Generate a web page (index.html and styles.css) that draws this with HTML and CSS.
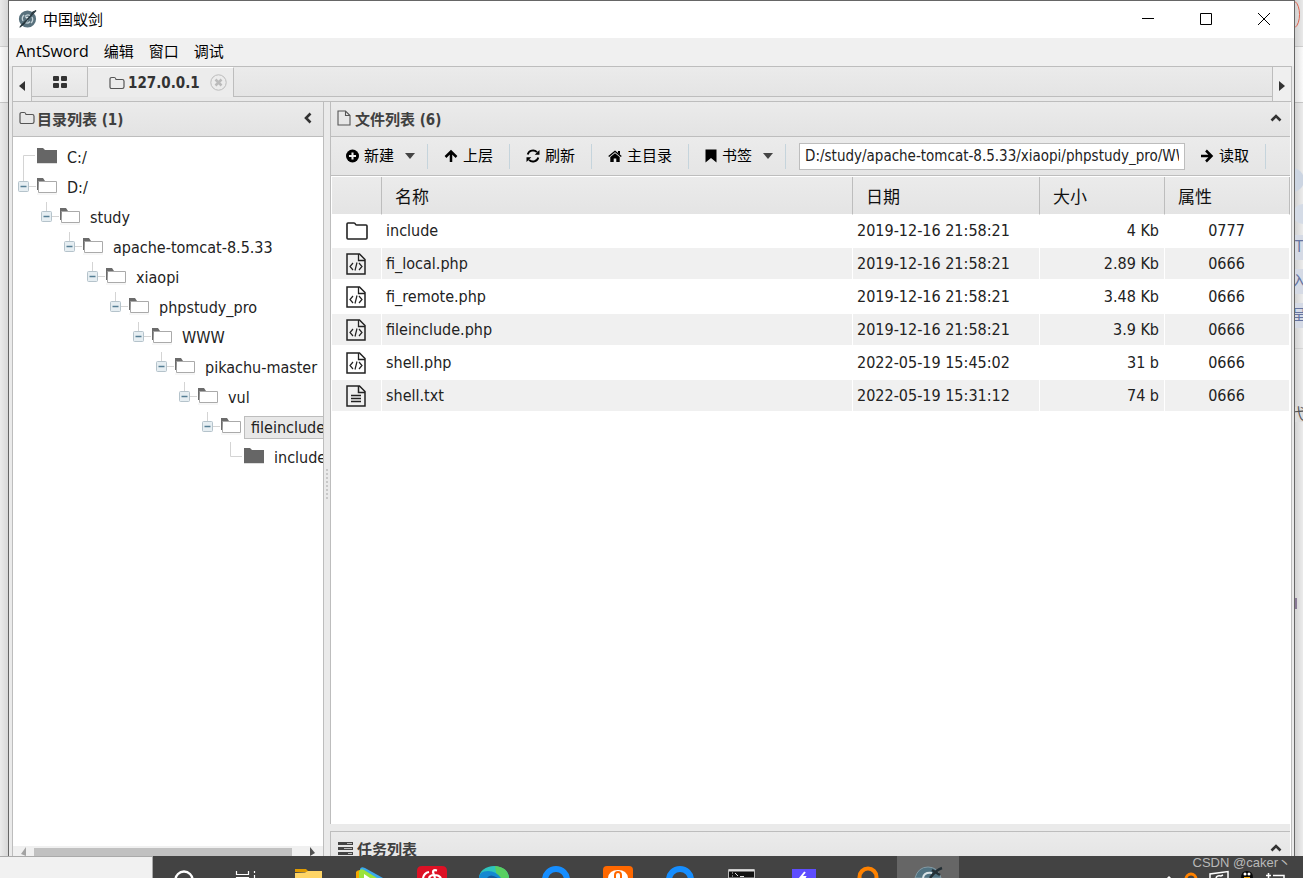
FILE: index.html
```html
<!DOCTYPE html>
<html lang="zh-CN">
<head>
<meta charset="utf-8">
<title>中国蚁剑</title>
<link rel="stylesheet" href="styles.css">
</head>
<body>
<svg class="defs" aria-hidden="true">
  <symbol id="folder-open" viewBox="0 0 20 17">
    <path d="M1.500 3.500h18v11h-18z" fill="#fff" stroke="#aaa"/><path d="M0 0h6l2 3H1.500L1 12H0z" fill="#6b6b6b"/><path d="M0 16h20" stroke="#eee"/>
  </symbol>
  <symbol id="folder-full" viewBox="0 0 20 17">
    <path d="M0 0h6l2 2h12v13H0z" fill="#666"/><path d="M0 15.500h20" stroke="#ddd"/>
  </symbol>
  <symbol id="join" viewBox="0 0 24 30">
    <path d="M10.500 0v14M10 14.500h13" stroke="#d4d4d4" fill="none"/>
    <rect x="5.500" y="9.500" width="10" height="10" rx="1" fill="#e6eef2" stroke="#b5c3cb"/><path d="M7.500 14.500h6" stroke="#557e94" stroke-width="1.500"/>
  </symbol>
  <symbol id="folder-o" viewBox="0 0 16 14">
    <path d="M1 3.200Q1 1.500 2.700 1.500h2.600Q6.700 1.500 7 3.500h6.300Q15 3.500 15 5.200v5.600q0 1.700-1.700 1.700H2.700Q1 12.500 1 10.800z" fill="none" stroke="#555" stroke-width="1.200"/>
  </symbol>
  <symbol id="file-code" viewBox="0 0 20 22">
    <path d="M1 1h12.500L19 6.500V21H1z" fill="none" stroke="#222" stroke-width="1.500"/><path d="M12.500 1v6.500H19" fill="none" stroke="#222" stroke-width="1.300"/>
    <path d="M7 10l-3 3.500 3 3.500M13 10l3 3.500-3 3.500M11 9.500l-2 8" fill="none" stroke="#222" stroke-width="1.200"/>
  </symbol>
  <symbol id="chev" viewBox="0 0 12 8"><path d="M1.500 6.500L6 2l4.500 4.500" fill="none" stroke="#333" stroke-width="2.600"/></symbol>
</svg>

<div class="desktop">
  <div class="stage">
    <div class="behind behind-left"></div>

    <main class="window">
      <header class="titlebar">
        <svg width="20" height="20" viewBox="0 0 20 20"><circle cx="9.500" cy="10" r="8.600" fill="#58717d"/><path d="M6 6a5 5 0 0 0-1 6M13 14a5 5 0 0 0 1-6M12 6.500a4 4 0 0 0-5 1M7 13.500a4 4 0 0 0 5-1" fill="none" stroke="#c6d3d8" stroke-width="1.300"/><path d="M9 7.500v5M7.500 8.500h3" stroke="#dce6ea"/><path d="M18.500 1L14 5l-2 1.500 2.500-4zM1 19l5-3.500 2.500-3-4 2z" fill="#27363d"/><path d="M18 1.500L2 18" stroke="#27363d" stroke-width="1.200"/></svg>
        <h1>中国蚁剑</h1>
        <div class="controls">
          <button aria-label="最小化"><svg width="14" height="14"><path d="M1 6.500h12" stroke="#000"/></svg></button>
          <button aria-label="最大化"><svg width="14" height="14"><path d="M1.500 1.500h11v11h-11z" fill="none" stroke="#000"/></svg></button>
          <button aria-label="关闭"><svg width="14" height="14"><path d="M1 1l12 12M13 1L1 13" stroke="#000"/></svg></button>
        </div>
      </header>

      <nav class="menubar">
        <button class="brand">AntSword</button><button>编辑</button><button>窗口</button><button>调试</button>
      </nav>

      <div class="workspace">
        <div class="tabbar">
          <button class="scroll scroll-left" aria-label="向左"><svg width="6" height="10"><path d="M6 0v10L0 5z" fill="#333"/></svg></button>
          <div class="tabs">
            <button class="tab home-tab" aria-label="主页"><svg width="14" height="12" fill="#333"><rect width="6" height="5" rx="1"/><rect x="8" width="6" height="5" rx="1"/><rect y="7" width="6" height="5" rx="1"/><rect x="8" y="7" width="6" height="5" rx="1"/></svg></button>
            <div class="tab active"><svg width="16" height="14"><use href="#folder-o"/></svg><span>127.0.0.1</span>
              <button class="close" aria-label="关闭标签"><svg width="17" height="17" viewBox="0 0 17 17"><circle cx="8.500" cy="8.500" r="7.700" fill="none" stroke="#bbb"/><path d="M5.500 5.500l6 6M11.500 5.500l-6 6" stroke="#bbb" stroke-width="2.500"/></svg></button>
            </div>
          </div>
          <button class="scroll scroll-right" aria-label="向右"><svg width="6" height="10"><path d="M0 0v10l6-5z" fill="#333"/></svg></button>
        </div>

        <div class="panes">
          <section class="side">
            <header class="pane-head side-head"><svg width="16" height="14"><use href="#folder-o"/></svg><h2>目录列表 (1)</h2>
              <button class="collapse" aria-label="折叠"><svg width="8" height="12"><path d="M6.500 1.500L2 6l4.500 4.500" fill="none" stroke="#333" stroke-width="2.600"/></svg></button></header>
            <div class="tree">
              <ul>
                <li><div class="node"><svg width="24" height="30"><path d="M22 13.500H10.500V30" fill="none" stroke="#d4d4d4"/></svg><svg width="20" height="17"><use href="#folder-full"/></svg><span>C:/</span></div></li>
                <li><div class="node"><svg width="24" height="30"><use href="#join"/></svg><svg width="20" height="17"><use href="#folder-open"/></svg><span>D:/</span></div>
                <ul><li><div class="node"><svg width="24" height="30"><use href="#join"/></svg><svg width="20" height="17"><use href="#folder-open"/></svg><span>study</span></div>
                <ul><li><div class="node"><svg width="24" height="30"><use href="#join"/></svg><svg width="20" height="17"><use href="#folder-open"/></svg><span>apache-tomcat-8.5.33</span></div>
                <ul><li><div class="node"><svg width="24" height="30"><use href="#join"/></svg><svg width="20" height="17"><use href="#folder-open"/></svg><span>xiaopi</span></div>
                <ul><li><div class="node"><svg width="24" height="30"><use href="#join"/></svg><svg width="20" height="17"><use href="#folder-open"/></svg><span>phpstudy_pro</span></div>
                <ul><li><div class="node"><svg width="24" height="30"><use href="#join"/></svg><svg width="20" height="17"><use href="#folder-open"/></svg><span>WWW</span></div>
                <ul><li><div class="node"><svg width="24" height="30"><use href="#join"/></svg><svg width="20" height="17"><use href="#folder-open"/></svg><span>pikachu-master</span></div>
                <ul><li><div class="node"><svg width="24" height="30"><use href="#join"/></svg><svg width="20" height="17"><use href="#folder-open"/></svg><span>vul</span></div>
                <ul><li><div class="node"><svg width="24" height="30"><use href="#join"/></svg><svg width="20" height="17"><use href="#folder-open"/></svg><span class="selected">fileinclude</span></div>
                <ul><li><div class="node"><svg width="24" height="30"><path d="M10.500 0v14.500H22" fill="none" stroke="#d4d4d4"/></svg><svg width="20" height="17"><use href="#folder-full"/></svg><span>include</span></div></li></ul>
                </li></ul></li></ul></li></ul></li></ul></li></ul></li></ul></li></ul></li></ul></li>
              </ul>
            </div>
            <div class="hscroll"><svg width="5" height="10"><path d="M5 1v9L0 8z" fill="#a3a3a3"/></svg><div class="thumb"></div><svg width="5" height="10"><path d="M0 1v9l5-3z" fill="#505050"/></svg></div>
          </section>

          <div class="splitter"><i></i></div>

          <div class="content">
            <section class="files">
              <header class="pane-head"><svg width="14" height="16" viewBox="0 0 14 16"><path d="M1 1h7.500L13 5.500V15H1zM8.500 1v4.500H13" fill="none" stroke="#555" stroke-width="1.100"/></svg><h2>文件列表 (6)</h2>
                <button class="collapse" aria-label="折叠"><svg width="12" height="8"><use href="#chev"/></svg></button></header>
              <div class="toolbar">
                <button class="tool first"><svg width="13" height="14" viewBox="0 0 14 14"><circle cx="7" cy="7" r="7"/><path d="M7 3.200v7.600M3.200 7h7.600" stroke="#eee" stroke-width="2.200"/></svg><span>新建</span><svg class="caret" width="10" height="6"><path d="M0 0h10L5 6z" fill="#444"/></svg></button>
                <button class="tool"><svg width="14" height="14" viewBox="0 0 14 14"><path d="M7 13V2.500M1.500 8L7 2.500 12.500 8" fill="none" stroke="#000" stroke-width="2.500"/></svg><span>上层</span></button>
                <button class="tool"><svg width="14" height="14" viewBox="0 0 14 14"><path d="M1.700 5.500A5.500 5.500 0 0 1 11 3.200M12.300 8.500A5.500 5.500 0 0 1 3 10.800" fill="none" stroke="#000" stroke-width="1.900"/><path d="M13.500 1v4.800H8.700zM.5 13V8.200h4.800z"/></svg><span>刷新</span></button>
                <button class="tool"><svg width="14" height="14" viewBox="0 0 14 14"><path d="M.7 7.500L7 2.300l6.300 5.200" fill="none" stroke="#000" stroke-width="1.400"/><path d="M10 2h2v4l-2-2zM2.300 8L7 4.200 11.700 8v5H8.300V9.500H5.700V13H2.300z"/></svg><span>主目录</span></button>
                <button class="tool marks"><svg width="12" height="14" viewBox="0 0 12 14"><path d="M.5.500h11v13L6 9 .5 13.500z"/></svg><span>书签</span><svg class="caret" width="10" height="6"><path d="M0 0h10L5 6z" fill="#444"/></svg></button>
                <input class="path" type="text" aria-label="路径" value="D:/study/apache-tomcat-8.5.33/xiaopi/phpstudy_pro/WWW/pikachu-master/vul/fileinclude/">
                <button class="tool read"><svg width="14" height="14" viewBox="0 0 14 14"><path d="M1 7h10.500M6 1.500L11.500 7 6 12.500" fill="none" stroke="#000" stroke-width="2.500"/></svg><span>读取</span></button>
              </div>
              <table>
                <colgroup><col class="c-icon"><col><col class="c-date"><col class="c-small"><col class="c-small"></colgroup>
                <thead><tr><th></th><th>名称</th><th>日期</th><th>大小</th><th>属性</th></tr></thead>
                <tbody>
                  <tr><td><svg width="22" height="18" viewBox="0 0 22 18"><path d="M1 2q0-1 1-1h6q1 0 1.500 1.200.3.800 1.500.8h9q1 0 1 1v12q0 1-1 1H2q-1 0-1-1z" fill="none" stroke="#222" stroke-width="1.600"/></svg></td><td>include</td><td>2019-12-16 21:58:21</td><td>4 Kb</td><td>0777</td></tr>
                  <tr><td><svg width="20" height="22"><use href="#file-code"/></svg></td><td>fi_local.php</td><td>2019-12-16 21:58:21</td><td>2.89 Kb</td><td>0666</td></tr>
                  <tr><td><svg width="20" height="22"><use href="#file-code"/></svg></td><td>fi_remote.php</td><td>2019-12-16 21:58:21</td><td>3.48 Kb</td><td>0666</td></tr>
                  <tr><td><svg width="20" height="22"><use href="#file-code"/></svg></td><td>fileinclude.php</td><td>2019-12-16 21:58:21</td><td>3.9 Kb</td><td>0666</td></tr>
                  <tr><td><svg width="20" height="22"><use href="#file-code"/></svg></td><td>shell.php</td><td>2022-05-19 15:45:02</td><td>31 b</td><td>0666</td></tr>
                  <tr><td><svg width="20" height="22" viewBox="0 0 20 22"><path d="M1 1h12.500L19 6.500V21H1zM12.500 1v6.500H19" fill="none" stroke="#222" stroke-width="1.500"/><path d="M5 10.500h10M5 13.500h10M5 16.500h10" stroke="#222" stroke-width="1.400"/></svg></td><td>shell.txt</td><td>2022-05-19 15:31:12</td><td>74 b</td><td>0666</td></tr>
                </tbody>
              </table>
            </section>
            <section class="tasks">
              <header class="pane-head"><svg width="16" height="13" viewBox="0 0 16 13"><path d="M1 0h15v3H1zM1 5h15v3H1zM1 10h15v3H1z" fill="#444"/><path d="M10 1.500h5M7 6.500h8M11 11.500h4" stroke="#bbb"/></svg><h2>任务列表</h2>
                <button class="collapse" aria-label="展开"><svg width="12" height="8"><use href="#chev"/></svg></button></header>
            </section>
          </div>
        </div>
      </div>
    </main>

    <div class="behind behind-right">
      <svg width="8" height="228" viewBox="0 0 8 228"><path d="M0 1.500c6 4 6 22 0 26" fill="none" stroke="#e0624d"/><circle cx="-3" cy="180" r="12" fill="#ccd5e2"/><circle cx="8" cy="214" r="10" fill="#d4dbe6"/></svg>
      <span>T</span><span>入</span><span>呈</span><span class="plain">弋</span><i></i>
    </div>
  </div>

  <footer class="taskbar">
    <div class="status"></div>
    <div class="apps">
      <button aria-label="搜索"><svg width="32" height="22"><circle cx="16" cy="24" r="8.500" fill="none" stroke="#fff" stroke-width="2.400"/></svg></button>
      <button aria-label="任务视图"><svg width="32" height="22"><path d="M6.500 15v3.500h12V15M6.500 22v-.5h12v.5M24.500 15v2M24.500 19v3" fill="none" stroke="#fff" stroke-width="1.200"/></svg></button>
      <button aria-label="文件"><svg width="32" height="22"><path d="M3 13h11l3 3H3z" fill="#e09b00"/><path d="M3 17l10-.5 3-1.500h14v7H3z" fill="#ffd566"/></svg></button>
      <button aria-label="视频"><svg width="32" height="22"><path d="M2 22v-6q1-2 5-2v8z" fill="#f5a800"/><path d="M6 22v-9q1-3 5-1l18 10z" fill="#39a9ee"/><path d="M5 22v-7q2-3 5-1l13 8z" fill="#9be33b"/><path d="M10 22v-4l6 4z" fill="#fff"/></svg></button>
      <button aria-label="音乐"><svg width="32" height="22"><path d="M1 22v-7q0-5 5-5h20q5 0 5 5v7z" fill="#dd1125"/><path d="M13 16q-5 1-6 6M21 14.500q-4-1-4 1.500l2 6M13 22q1-3 5-3 5 0 7 3" fill="none" stroke="#fff" stroke-width="2.200"/></svg></button>
      <button aria-label="浏览器"><svg width="32" height="22"><path d="M1 22a15 12 0 0 1 30 0z" fill="#2ec4bd"/><path d="M17 10q13 1 14 12H19z" fill="#58cf61"/><path d="M1 22q0-7 9-7 8 0 13 7z" fill="#1588d1"/><path d="M9 22q3-5 11 0z" fill="#14599a"/></svg></button>
      <button aria-label="助手"><svg width="32" height="22"><circle cx="16" cy="24" r="11" fill="none" stroke="#168eff" stroke-width="6"/></svg></button>
      <button aria-label="集成环境"><svg width="32" height="22"><path d="M1 22v-8q0-4 4-4h22q4 0 4 4v8z" fill="#ff6800"/><path d="M6 22q1-8 10-8t10 8z" fill="#fff"/><path d="M13 22v-3q0-3 3-3t3 3v3" fill="none" stroke="#ff6800" stroke-width="2"/></svg></button>
      <button aria-label="工具"><svg width="32" height="22"><circle cx="16" cy="24" r="11" fill="none" stroke="#168eff" stroke-width="6"/></svg></button>
      <button aria-label="终端"><svg width="32" height="22"><path d="M2.500 13.500h26V22h-26z" fill="#111" stroke="#bbb"/><path d="M3 14.500h25" stroke="#ddd" stroke-width="2"/><path d="M6 17h1M6 20h1M9 17l3 3M14 20.500h4" stroke="#ddd"/></svg></button>
      <button aria-label="代理"><svg width="32" height="22"><path d="M4 13h24v9H4z" fill="#5e4dff"/><path d="M17 16l-4 5h4l-1 2" fill="none" stroke="#fff" stroke-width="2"/></svg></button>
      <button aria-label="搜索工具"><svg width="32" height="22"><circle cx="18" cy="21" r="8.500" fill="none" stroke="#ff8200" stroke-width="4"/></svg></button>
      <button class="current" aria-label="中国蚁剑"><svg width="32" height="22"><path d="M3 22q3-11 13-11t13 11z" fill="#517382" stroke="#829aa5"/><path d="M11 22q1-6 9-5" fill="none" stroke="#d8e2e6" stroke-width="2"/><path d="M30 12q-6 2-12 10M20 14l8 5" stroke="#232f35" stroke-width="2.500" fill="none"/></svg></button>
    </div>
    <div class="tray">
      <svg width="8" height="22"><path d="M1 24l3-3 3 3" fill="none" stroke="#fff" stroke-width="1.500"/></svg>
      <svg width="14" height="22"><circle cx="7" cy="23" r="5" fill="none" stroke="#ff8200" stroke-width="3"/></svg>
      <svg width="20" height="22"><path d="M1 22v-4l18-2.500V22" fill="none" stroke="#fff" stroke-width="1.500"/><path d="M7 22q1-3 5-2l2-1" fill="none" stroke="#fff" stroke-width="1.500"/></svg>
      <svg width="14" height="22"><path d="M1 22q0-7 6-7t6 7z" fill="#080808"/><circle cx="5" cy="18" r="1.500" fill="#fff"/><circle cx="9" cy="18" r="1.500" fill="#fff"/><path d="M4 21h6v1H4z" fill="#f5a800"/></svg>
      <svg width="20" height="22"><path d="M1 19.500h5M3.500 17v5M8 19.500h11V22" fill="none" stroke="#fff" stroke-width="1.500"/></svg>
    </div>
    <div class="credit">CSDN @caker丶</div>
  </footer>
</div>
</body>
</html>
```

FILE: styles.css
```css
* { box-sizing: border-box; }

body {
  margin: 0;
  font-family: "DejaVu Sans Condensed", "Noto Sans CJK SC", sans-serif;
  font-size: 16px;
  color: #222;
}

.defs { position: absolute; width: 0; height: 0; }
svg { display: block; flex: none; }
h1, h2 { margin: 0; font-size: 15px; }
ul { list-style: none; margin: 0; padding: 0; }

button {
  font: inherit;
  color: inherit;
  border: 0;
  padding: 0;
  background: none;
  display: flex;
  align-items: center;
  justify-content: center;
}

.desktop { height: 100vh; display: flex; flex-direction: column; overflow: hidden; }
.stage { flex: 1; min-height: 0; display: grid; grid-template-columns: 8px 1fr 8px; }

/* Page visible behind the window */
.behind {
  overflow: hidden;
  background:
    linear-gradient(90deg, rgba(0,0,0,.02), rgba(0,0,0,.1)),
    linear-gradient(#eee 46px, #d5d5d5 46px 47px, #fff 47px 102px, #ccc 102px 103px, #f0f0f0 103px);
}
.behind-right {
  background:
    linear-gradient(270deg, rgba(0,0,0,.02), rgba(0,0,0,.12)),
    linear-gradient(#eee 46px, #d5d5d5 46px 47px, #fff 47px 102px, #ccc 102px 103px, #f0f0f0 103px 348px, #ddd 348px 349px, #f0f0f0 349px);
  color: #6674a0;
  font-size: 15px;
}
.behind-right svg { margin-bottom: 7px; }
.behind-right span { display: flex; justify-content: center; height: 25px; line-height: 25px; margin-bottom: 9px; background: #d5dae5; }
.behind-right .plain { margin-top: 79px; height: 15px; line-height: 15px; color: #555; background: #dcdcdc; }
.behind-right i { display: block; width: 2px; height: 11px; margin-top: 176px; background: #8a7b96; }

/* Window frame */
.window {
  min-width: 0;
  min-height: 0;
  display: flex;
  flex-direction: column;
  border: solid #666;
  border-width: 1px 1px 0;
  background: #eaeaea;
}
.titlebar { flex: none; height: 37px; display: flex; align-items: center; padding: 0 1px 2px 9px; gap: 5px; background: #fff; }
.titlebar h1 { font-weight: 400; color: #000; }
.controls { margin-left: auto; display: flex; height: 100%; }
.controls button { width: 58px; }

.menubar { flex: none; height: 28px; display: flex; align-items: center; gap: 15px; padding: 0 0 3px 7px; background: #f0f0f0; font-size: 15px; color: #000; }
.brand { font-family: "Open Sans", sans-serif; font-size: 16px; }

.workspace { flex: 1; min-height: 0; display: flex; flex-direction: column; margin: 0 2px 0 3px; border: solid #bdbdbd; border-width: 1px 1px 0; }

/* Tabs */
.tabbar { flex: none; height: 35px; display: flex; border-bottom: 1px solid #bdbdbd; background: #e9e9e9; }
.scroll { width: 19px; padding-top: 4px; background: #efefef; }
.scroll-left { border-right: 1px solid #bdbdbd; }
.scroll-right { border-left: 1px solid #bdbdbd; }
.tabs { flex: 1; height: 30px; display: flex; border-bottom: 1px solid #bdbdbd; background: linear-gradient(#ebebeb, #e4e4e4); }
.tab { height: 29px; border-right: 1px solid #bdbdbd; }
.home-tab { width: 56px; background: linear-gradient(#efefef, #e6e6e6); }
.active { height: 30px; display: flex; align-items: center; gap: 3px; padding: 0 6px 0 21px; font-size: 15px; font-weight: 700; color: #333; background: #ececec; border-top: 1px solid #fff; }
.close { margin-left: 7px; }

/* Panes */
.panes { flex: 1; min-height: 0; display: grid; grid-template-columns: 311px 6px 1fr; }
.pane-head {
  flex: none;
  height: 35px;
  display: flex;
  align-items: center;
  gap: 4px;
  padding: 0 8px 2px 6px;
  color: #404040;
  border-bottom: 1px solid #bdbdbd;
  background: linear-gradient(#ebebeb, #e3e3e3);
}
.side-head { gap: 2px; padding-right: 11px; }
.collapse { margin-left: auto; }

.side { min-width: 0; min-height: 0; display: flex; flex-direction: column; background: #fff; border-right: 1px solid #bdbdbd; }
.tree { flex: 1; min-height: 0; overflow: hidden; padding-top: 5px; }
.tree ul ul { padding-left: 23px; }
.node { height: 30px; display: flex; align-items: center; white-space: nowrap; }
.node svg + svg { margin: 0 3px 2px 0; }
.node span { height: 23px; line-height: 21px; padding: 0 6px; border: 1px solid transparent; }
.node .selected { background: #e8e8e8; border-color: #bdbdbd; }

.hscroll { flex: none; height: 10px; display: flex; align-items: flex-end; gap: 8px; padding: 0 8px; background: #f0f0f0; overflow: hidden; }
.thumb { flex: 1; height: 8px; margin-right: 10px; background: #c1c1c1; }

.splitter { display: flex; align-items: center; justify-content: center; padding-top: 10px; background: #eaeaea; }
.splitter i { height: 30px; border-left: 2px dotted #c8c8c8; }

.content { min-width: 0; min-height: 0; display: flex; flex-direction: column; gap: 7px; background: #eaeaea; border-right: 1px solid #fff; }
.files { flex: 1; min-height: 0; display: flex; flex-direction: column; background: #fff; border-left: 1px solid #bdbdbd; }
.tasks { flex: none; height: 25px; overflow: hidden; border: solid #bdbdbd; border-width: 1px 0 0 1px; }

.toolbar { flex: none; height: 39px; display: flex; align-items: center; border-bottom: 1px solid #bdbdbd; background: linear-gradient(#ebebeb, #e5e5e5); }
.tool { height: 25px; gap: 5px; padding: 0 16px; white-space: nowrap; border-right: 1px solid #c5d4dc; font-size: 15px; color: #000; }
.tool span { padding-bottom: 4px; }
.first { padding: 0 12px 0 15px; }
.marks { padding-right: 12px; }
.caret { margin-left: 6px; }
.path { flex: 1; min-width: 0; height: 27px; margin: 0 -1px 0 13px; padding: 0 5px; border: 1px solid #bdbdbd; font: inherit; font-size: 15px; color: #222; background: #fff; }
.read { margin-right: 24px; }

/* File table */
table { width: 100%; table-layout: fixed; border-collapse: separate; border-spacing: 0; border-top: 1px solid #fff; padding-left: 1px; }
.c-icon { width: 50px; }
.c-date { width: 187px; }
.c-small { width: 125px; }
th { height: 38px; padding: 0 0 0 13px; text-align: left; font-size: 17px; font-weight: 400; color: #111; background: linear-gradient(#ebebeb, #e4e4e4); border-right: 1px solid #bdbdbd; border-bottom: 1px solid #fff; }
td { height: 33px; padding: 0 5px 0 4px; white-space: nowrap; border: solid #fff; border-width: 0 1px 2px 0; }
td:first-child { padding: 0 0 0 14px; }
td:nth-child(4) { text-align: right; }
td:nth-child(5) { text-align: center; }
tbody tr:nth-child(even) td { background: #f0f0f0; }

/* Taskbar */
.taskbar { position: relative; flex: none; height: 22px; display: flex; overflow: hidden; background: #434343; }
.status { width: 153px; background: #f1f1f1; border: solid #aaa; border-width: 1px 1px 0 0; }
.apps { display: flex; }
.apps button { width: 62px; }
.apps .current { background: #666; }
.tray { margin-left: auto; display: flex; gap: 11px; padding-right: 18px; }
.credit { position: absolute; right: 12px; top: 0; font: 13px/13px "Liberation Sans", "Noto Sans CJK SC", sans-serif; color: #b9b9b9; }
```
